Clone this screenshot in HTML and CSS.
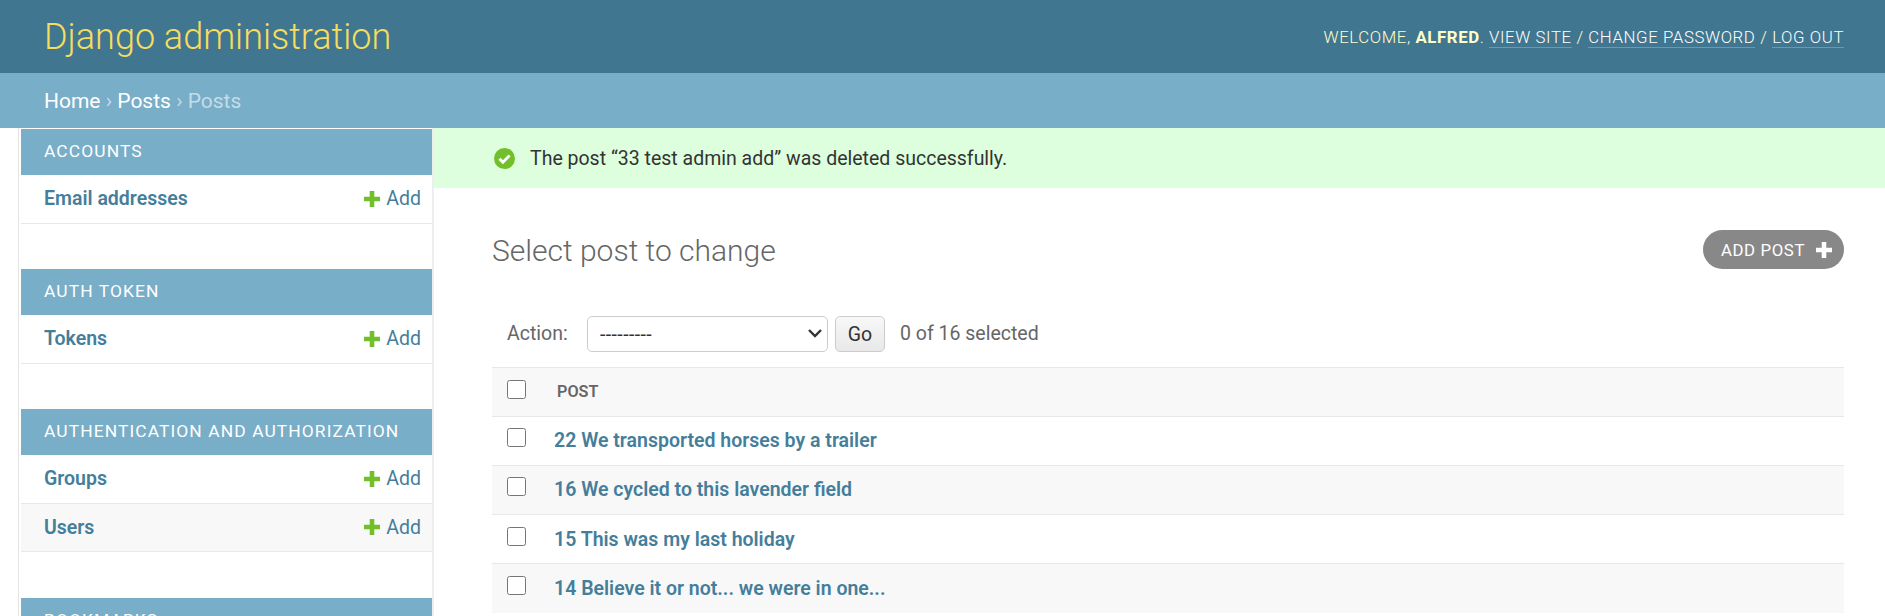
FILE: index.html
```html
<!DOCTYPE html>
<html lang="en">
<head>
    <meta charset="UTF-8">
    <title>Select post to change | Django site admin</title>
    <link rel="stylesheet" href="styles.css">
</head>
<body>
    <div id="header">
        <h1 id="branding">Django administration</h1>
        <div id="user-tools">
            Welcome, <strong>alfred</strong>.
            <a href="#">View site</a> /
            <a href="#">Change password</a> /
            <a href="#">Log out</a>
        </div>
    </div>
    <div class="breadcrumbs">
        <a href="#">Home</a> <span class="sep">›</span> <a href="#">Posts</a> <span class="sep">›</span> Posts
    </div>
    <div class="main">
        <div id="nav-sidebar">
            <div class="module">
                <div class="caption">Accounts</div>
                <div class="model-row">
                    <a class="model-name" href="#">Email addresses</a>
                    <a class="addlink" href="#"><svg viewBox="0 0 14 14"><path d="M5 0h4v5h5v4H9v5H5V9H0V5h5z" fill="#70bf2b"/></svg>Add</a>
                </div>
            </div>
            <div class="module">
                <div class="caption">Auth Token</div>
                <div class="model-row">
                    <a class="model-name" href="#">Tokens</a>
                    <a class="addlink" href="#"><svg viewBox="0 0 14 14"><path d="M5 0h4v5h5v4H9v5H5V9H0V5h5z" fill="#70bf2b"/></svg>Add</a>
                </div>
            </div>
            <div class="module two-rows">
                <div class="caption">Authentication and Authorization</div>
                <div class="model-row">
                    <a class="model-name" href="#">Groups</a>
                    <a class="addlink" href="#"><svg viewBox="0 0 14 14"><path d="M5 0h4v5h5v4H9v5H5V9H0V5h5z" fill="#70bf2b"/></svg>Add</a>
                </div>
                <div class="model-row alt">
                    <a class="model-name" href="#">Users</a>
                    <a class="addlink" href="#"><svg viewBox="0 0 14 14"><path d="M5 0h4v5h5v4H9v5H5V9H0V5h5z" fill="#70bf2b"/></svg>Add</a>
                </div>
            </div>
            <div class="module">
                <div class="caption">Bookmarks</div>
            </div>
        </div>
        <div id="content-wrap">
            <div class="messagelist">
                <svg class="msg-icon" viewBox="0 0 20 20"><circle cx="10" cy="10" r="10" fill="#70bf2b"/><path d="M5.200 10.300l3.300 3.200 6.300-6.400" fill="none" stroke="#fff" stroke-width="2.800"/></svg>
                The post “33 test admin add” was deleted successfully.
            </div>
            <div id="content">
                <div class="title-row">
                    <h2>Select post to change</h2>
                    <a class="addbutton" href="#">Add post<svg viewBox="0 0 14 14"><path d="M5 0h4v5h5v4H9v5H5V9H0V5h5z" fill="#fff"/></svg></a>
                </div>
                <div class="actions">
                    <label for="action">Action:</label>
                    <div class="select-wrap">
                        <select id="action"><option>---------</option></select>
                        <svg class="chevron" viewBox="0 0 14 9"><path d="M1 1l6 6 6-6" fill="none" stroke="#333" stroke-width="2.400"/></svg>
                    </div>
                    <button type="button">Go</button>
                    <span class="counter">0 of 16 selected</span>
                </div>
                <div class="result-list">
                    <div class="row head">
                        <input type="checkbox">
                        <span class="col-head">Post</span>
                    </div>
                    <div class="row">
                        <input type="checkbox">
                        <a href="#">22 We transported horses by a trailer</a>
                    </div>
                    <div class="row alt">
                        <input type="checkbox">
                        <a href="#">16 We cycled to this lavender field</a>
                    </div>
                    <div class="row">
                        <input type="checkbox">
                        <a href="#">15 This was my last holiday</a>
                    </div>
                    <div class="row alt last">
                        <input type="checkbox">
                        <a href="#">14 Believe it or not... we were in one...</a>
                    </div>
                </div>
            </div>
        </div>
    </div>
</body>
</html>
```

FILE: styles.css
```css
html, body {
    height: 616px;
    overflow: hidden;
}
body {
    margin: 0;
    font-family: Roboto, "Liberation Sans", sans-serif;
    font-size: 19.5px;
    color: #333;
    background-color: #fff;
}
a {
    color: #447e9b;
    text-decoration: none;
}

/* header */
#header {
    display: flex;
    justify-content: space-between;
    align-items: center;
    box-sizing: border-box;
    height: 73px;
    padding: 0 41px 0 44px;
    background-color: #417690;
}
#branding {
    margin: 0;
    font-size: 36px;
    font-weight: 300;
    color: #f5dd5d;
}
#user-tools {
    font-size: 16.8px;
    font-weight: 300;
    letter-spacing: 0.6px;
    text-transform: uppercase;
    color: #ffc;
}
#user-tools strong {
    font-weight: 700;
}
#user-tools a {
    color: #fff;
    border-bottom: 1px solid rgba(255, 255, 255, 0.25);
}
.breadcrumbs {
    box-sizing: border-box;
    height: 55px;
    padding: 1px 44px 0;
    line-height: 55px;
    font-size: 21px;
    color: #c4dce8;
    background-color: #79aec8;
}
.breadcrumbs a {
    color: #fff;
}
.sep {
    color: #c4dce8;
}

/* sidebar */
.main {
    display: flex;
}
#nav-sidebar {
    flex: none;
    box-sizing: border-box;
    width: 416px;
    margin-left: 18px;
    padding: 1px 0 0 2px;
    border-left: 1px solid #e4e4e4;
    border-right: 2px solid #eee;
}
.module {
    margin-bottom: 45.5px;
}
.module.two-rows {
    margin-bottom: 46px;
}
.caption {
    height: 46px;
    padding-left: 23px;
    line-height: 44px;
    font-size: 17.4px;
    letter-spacing: 1.1px;
    text-transform: uppercase;
    color: #fff;
    background-color: #79aec8;
}
.model-row {
    display: flex;
    justify-content: space-between;
    align-items: center;
    box-sizing: border-box;
    height: 48.5px;
    padding: 0 11px 0 23px;
    border-bottom: 1px solid #e8e8e8;
}
.model-row.alt {
    background-color: #f8f8f8;
}
.model-name {
    font-weight: 600;
}
.addlink {
    display: flex;
    align-items: center;
    gap: 6px;
}
.addlink svg {
    width: 16px;
    height: 16px;
}

/* main content */
#content-wrap {
    flex: 1;
    min-width: 0;
}
.messagelist {
    display: flex;
    align-items: center;
    gap: 15px;
    box-sizing: border-box;
    height: 60px;
    padding-left: 60px;
    background-color: #dfd;
}
.msg-icon {
    width: 21px;
    height: 21px;
}
#content {
    padding: 0 41px 0 58px;
}
.title-row {
    display: flex;
    justify-content: space-between;
    align-items: center;
    box-sizing: border-box;
    height: 128px;
    padding: 0 0 3px;
}
h2 {
    margin: 0;
    font-size: 30px;
    font-weight: 300;
    color: #666;
}
.addbutton {
    display: flex;
    align-items: center;
    gap: 11px;
    box-sizing: border-box;
    height: 39px;
    margin-bottom: 2px;
    padding: 0 12px 0 18px;
    border-radius: 20px;
    font-size: 16.8px;
    letter-spacing: 0.6px;
    text-transform: uppercase;
    color: #fff;
    background-color: #888;
}
.addbutton svg {
    width: 16px;
    height: 16px;
}
.actions {
    display: flex;
    align-items: center;
    height: 36px;
    padding-left: 15px;
    color: #666;
}
.actions label {
    width: 80px;
    margin-bottom: 1px;
}
.select-wrap {
    position: relative;
    display: flex;
}
.actions select {
    box-sizing: border-box;
    width: 241px;
    height: 36px;
    padding: 0 12px;
    border: 1px solid #ccc;
    border-radius: 5px;
    appearance: none;
    font-family: inherit;
    font-size: 19.5px;
    letter-spacing: 0.4px;
    color: #333;
    background-color: #fff;
}
.chevron {
    position: absolute;
    top: 13px;
    right: 6px;
    width: 14px;
    height: 9px;
}
.actions button {
    box-sizing: border-box;
    width: 50px;
    height: 36px;
    margin-left: 7px;
    border: 1px solid #ccc;
    border-radius: 5px;
    font-family: inherit;
    font-size: 19.5px;
    color: #333;
    background: linear-gradient(#f8f8f8, #e8e8e8);
}
.counter {
    margin: 0 0 2px 15px;
}
.result-list {
    margin-top: 14.5px;
    border-top: 1px solid #e8e8e8;
}
.row {
    display: flex;
    align-items: center;
    gap: 28px;
    box-sizing: border-box;
    height: 49.2px;
    padding-left: 15px;
    border-bottom: 1px solid #e8e8e8;
    font-weight: 600;
}
.row.last {
    border-bottom: none;
}
.row.head, .row.alt {
    background-color: #f8f8f8;
}
.row input {
    width: 19px;
    height: 19px;
    margin: 0 0 6px;
}
.row.head input {
    margin-bottom: 4px;
}
.col-head {
    margin-left: 3px;
    font-size: 16.2px;
    text-transform: uppercase;
    color: #666;
}
```
